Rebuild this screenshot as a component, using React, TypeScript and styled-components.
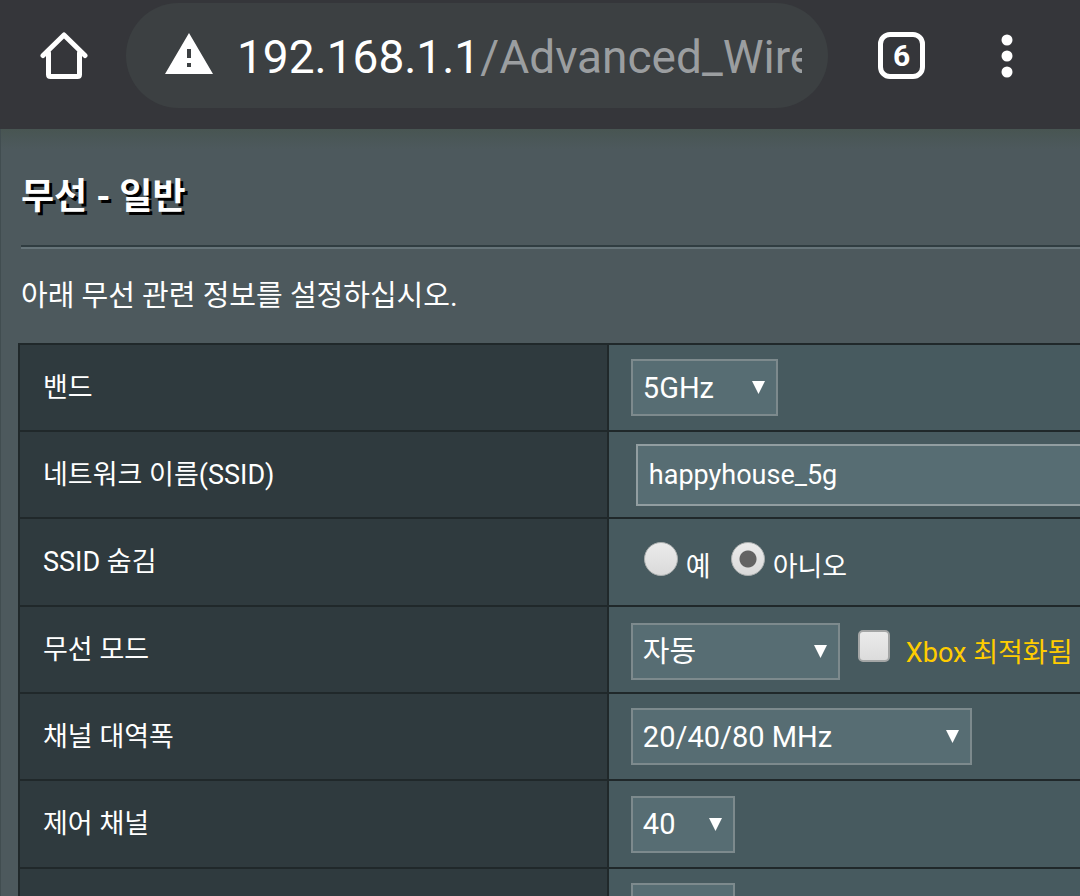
import React from "react";
import styled, { createGlobalStyle } from "styled-components";

const GlobalStyle = createGlobalStyle`
  *, *::before, *::after { box-sizing: border-box; }
  body {
    margin: 0;
    color: #fff;
    background: #4d595d;
    font-family: Roboto, "Noto Sans CJK KR", sans-serif;
  }
  button, input, select { font-family: inherit; color: inherit; }
`;

const Screen = styled.div`
  display: flex;
  flex-direction: column;
  height: 100vh;
  overflow: hidden;
`;

const Toolbar = styled.header`
  display: flex;
  align-items: center;
  flex: none;
  padding: 3px 37px 21px 27px;
  background: #35363a;
`;

const IconButton = styled.button`
  display: flex;
  align-items: center;
  justify-content: center;
  flex: none;
  width: 73px;
  height: 73px;
  padding: 0;
  border: 0;
  background: transparent;
`;

const AddressBar = styled.button`
  display: flex;
  align-items: center;
  gap: 24px;
  flex: 1;
  min-width: 0;
  height: 105px;
  margin: 0 37px 0 26px;
  padding: 0 26px 0 39px;
  border: 0;
  border-radius: 53px;
  background: #3c4042;
  text-align: left;

  svg { flex: none; }
`;

const Url = styled.span`
  flex: 1;
  min-width: 0;
  padding-top: 3px;
  overflow: hidden;
  white-space: nowrap;
  font-size: 46px;
  line-height: 56px;
`;

const UrlPath = styled.span`
  color: #9b9ea0;
`;

const TabCount = styled.span`
  display: flex;
  align-items: center;
  justify-content: center;
  width: 47px;
  height: 47px;
  border: 5px solid #fff;
  border-radius: 12px;
  font-size: 30px;
  font-weight: 700;
  line-height: 32px;
`;

const MenuButton = styled(IconButton)`
  margin-left: 32px;
`;

const Content = styled.main`
  flex: 1;
  min-height: 0;
  padding: 44px 0 0 17px;
  overflow: hidden;
  border-left: 1px solid #414d50;
  background: linear-gradient(#485552, #4d595d 20px);
`;

const Title = styled.h1`
  margin: 0 0 24px 3px;
  font-size: 36px;
  line-height: 48px;
  text-shadow: 3px 3px 0 #000;
`;

const Divider = styled.hr`
  height: 4px;
  margin: 0 0 0 3px;
  border: 0;
  border-top: 2px solid #303d41;
  background: #667479;
`;

const Description = styled.p`
  margin: 27px 0 27px 3px;
  font-size: 29px;
  line-height: 40px;
`;

const SettingsTable = styled.table`
  width: 100%;
  table-layout: fixed;
  border-collapse: collapse;
  border: 2px solid #20282a;
  border-right: 0;
`;

const Row = styled.tr`
  height: 87px;

  &:nth-child(3n) { height: 88px; }
`;

const HeadCell = styled.th`
  width: 55.5%;
  padding: 0 23px;
  border: 2px solid #20282a;
  background: #2f3a3e;
  font-size: 27px;
  font-weight: 400;
  line-height: 40px;
  text-align: left;
`;

const ValueCell = styled.td`
  padding: 0 0 0 22px;
  overflow: hidden;
  border: 2px solid #20282a;
  border-right: 0;
  background: #475a5f;
  font-size: 27px;
  line-height: 40px;
  white-space: nowrap;
`;

const Controls = styled.div`
  display: flex;
  align-items: baseline;
  padding-top: 4px;
`;

const SelectBox = styled.span<{ $width: number }>`
  display: grid;
  align-items: center;
  width: ${(p) => p.$width}px;

  > * { grid-area: 1 / 1; }

  svg {
    justify-self: end;
    margin-right: 13px;
    pointer-events: none;
  }
`;

const Select = styled.select`
  appearance: none;
  width: 100%;
  height: 57px;
  padding: 0 10px;
  border: 2px solid #7d8a8d;
  border-radius: 0;
  background: #576d73;
  font-size: 29px;
`;

const TextInput = styled.input`
  display: block;
  width: 480px;
  height: 62px;
  margin-left: 5px;
  padding: 0 11px;
  border: 2px solid #929ea1;
  border-radius: 0;
  background: #576d73;
  font-size: 27px;
`;

const ChoiceLabel = styled.label<{ $gap: number }>`
  display: flex;
  align-items: baseline;
  gap: ${(p) => p.$gap}px;
`;

const RadioGroup = styled(Controls)`
  gap: 20px;
  padding-left: 13px;
`;

const Radio = styled.input`
  appearance: none;
  width: 34px;
  height: 34px;
  margin: 0;
  border: 1px solid #aaaeae;
  border-radius: 50%;
  background: linear-gradient(#ebebeb, #dadada);

  &:checked {
    background:
      radial-gradient(circle, #636363 8px, transparent 9px),
      linear-gradient(#ebebeb, #dadada);
  }
`;

const Checkbox = styled.input`
  appearance: none;
  width: 32px;
  height: 32px;
  margin: 0 0 0 18px;
  border: 2px solid #a4a6a6;
  border-radius: 5px;
  background: linear-gradient(#ebebeb, #dcdcdc);

  &:checked { background: #636363; }
`;

const Highlight = styled.span`
  color: #fc0;
`;

function HomeIcon() {
  return (
    <svg width="48" height="48" viewBox="0 0 48 48" fill="none" stroke="#fff" strokeWidth="5" strokeLinecap="round" strokeLinejoin="round" aria-hidden="true">
      <path d="M8.500 21V42.500Q8.500 44.500 10.500 44.500H37.500Q39.500 44.500 39.500 42.500V21" />
      <path d="M3 23.500L24 3L45 23.500" />
    </svg>
  );
}

function WarningIcon() {
  return (
    <svg width="48" height="48" viewBox="0 0 48 48" aria-hidden="true">
      <path fill="#fff" fillRule="evenodd" d="M24 1L48 42H0ZM22 17V26H26V17ZM22 31V35H26V31Z" />
    </svg>
  );
}

function DotsIcon() {
  return (
    <svg width="12" height="44" viewBox="0 0 12 44" fill="#fff" aria-hidden="true">
      <circle cx="6" cy="6" r="5.500" />
      <circle cx="6" cy="22" r="5.500" />
      <circle cx="6" cy="38" r="5.500" />
    </svg>
  );
}

interface DropdownProps {
  id: string;
  width: number;
  value: string;
}

function Dropdown({ id, width, value }: DropdownProps) {
  return (
    <SelectBox $width={width}>
      <Select id={id} defaultValue={value}>
        <option value={value}>{value}</option>
      </Select>
      <svg width="13" height="13" viewBox="0 0 13 13" fill="#fff" aria-hidden="true">
        <path d="M0 0H13L6.500 13Z" />
      </svg>
    </SelectBox>
  );
}

interface SettingProps {
  label: string;
  htmlFor?: string;
  children: React.ReactNode;
}

function Setting({ label, htmlFor, children }: SettingProps) {
  return (
    <Row>
      <HeadCell scope="row">
        {htmlFor ? <label htmlFor={htmlFor}>{label}</label> : label}
      </HeadCell>
      <ValueCell>{children}</ValueCell>
    </Row>
  );
}

export default function App() {
  return (
    <Screen>
      <GlobalStyle />
      <Toolbar>
        <IconButton type="button">
          <HomeIcon />
        </IconButton>
        <AddressBar type="button">
          <WarningIcon />
          <Url>
            192.168.1.1<UrlPath>/Advanced_Wire</UrlPath>
          </Url>
        </AddressBar>
        <IconButton type="button">
          <TabCount>6</TabCount>
        </IconButton>
        <MenuButton type="button">
          <DotsIcon />
        </MenuButton>
      </Toolbar>
      <Content>
        <Title>무선 - 일반</Title>
        <Divider />
        <Description>아래 무선 관련 정보를 설정하십시오.</Description>
        <SettingsTable>
          <tbody>
            <Setting label="밴드" htmlFor="band">
              <Dropdown id="band" width={147} value="5GHz" />
            </Setting>
            <Setting label="네트워크 이름(SSID)" htmlFor="ssid">
              <TextInput id="ssid" type="text" defaultValue="happyhouse_5g" />
            </Setting>
            <Setting label="SSID 숨김">
              <RadioGroup role="radiogroup">
                <ChoiceLabel $gap={8}>
                  <Radio type="radio" name="hidden" />예
                </ChoiceLabel>
                <ChoiceLabel $gap={8}>
                  <Radio type="radio" name="hidden" defaultChecked />
                  아니오
                </ChoiceLabel>
              </RadioGroup>
            </Setting>
            <Setting label="무선 모드" htmlFor="mode">
              <Controls>
                <Dropdown id="mode" width={209} value="자동" />
                <ChoiceLabel $gap={16}>
                  <Checkbox type="checkbox" />
                  <Highlight>Xbox 최적화됨</Highlight>
                </ChoiceLabel>
              </Controls>
            </Setting>
            <Setting label="채널 대역폭" htmlFor="bandwidth">
              <Dropdown id="bandwidth" width={341} value="20/40/80 MHz" />
            </Setting>
            <Setting label="제어 채널" htmlFor="channel">
              <Dropdown id="channel" width={104} value="40" />
            </Setting>
            <Setting label="">
              <Dropdown id="extension" width={104} value="" />
            </Setting>
          </tbody>
        </SettingsTable>
      </Content>
    </Screen>
  );
}
